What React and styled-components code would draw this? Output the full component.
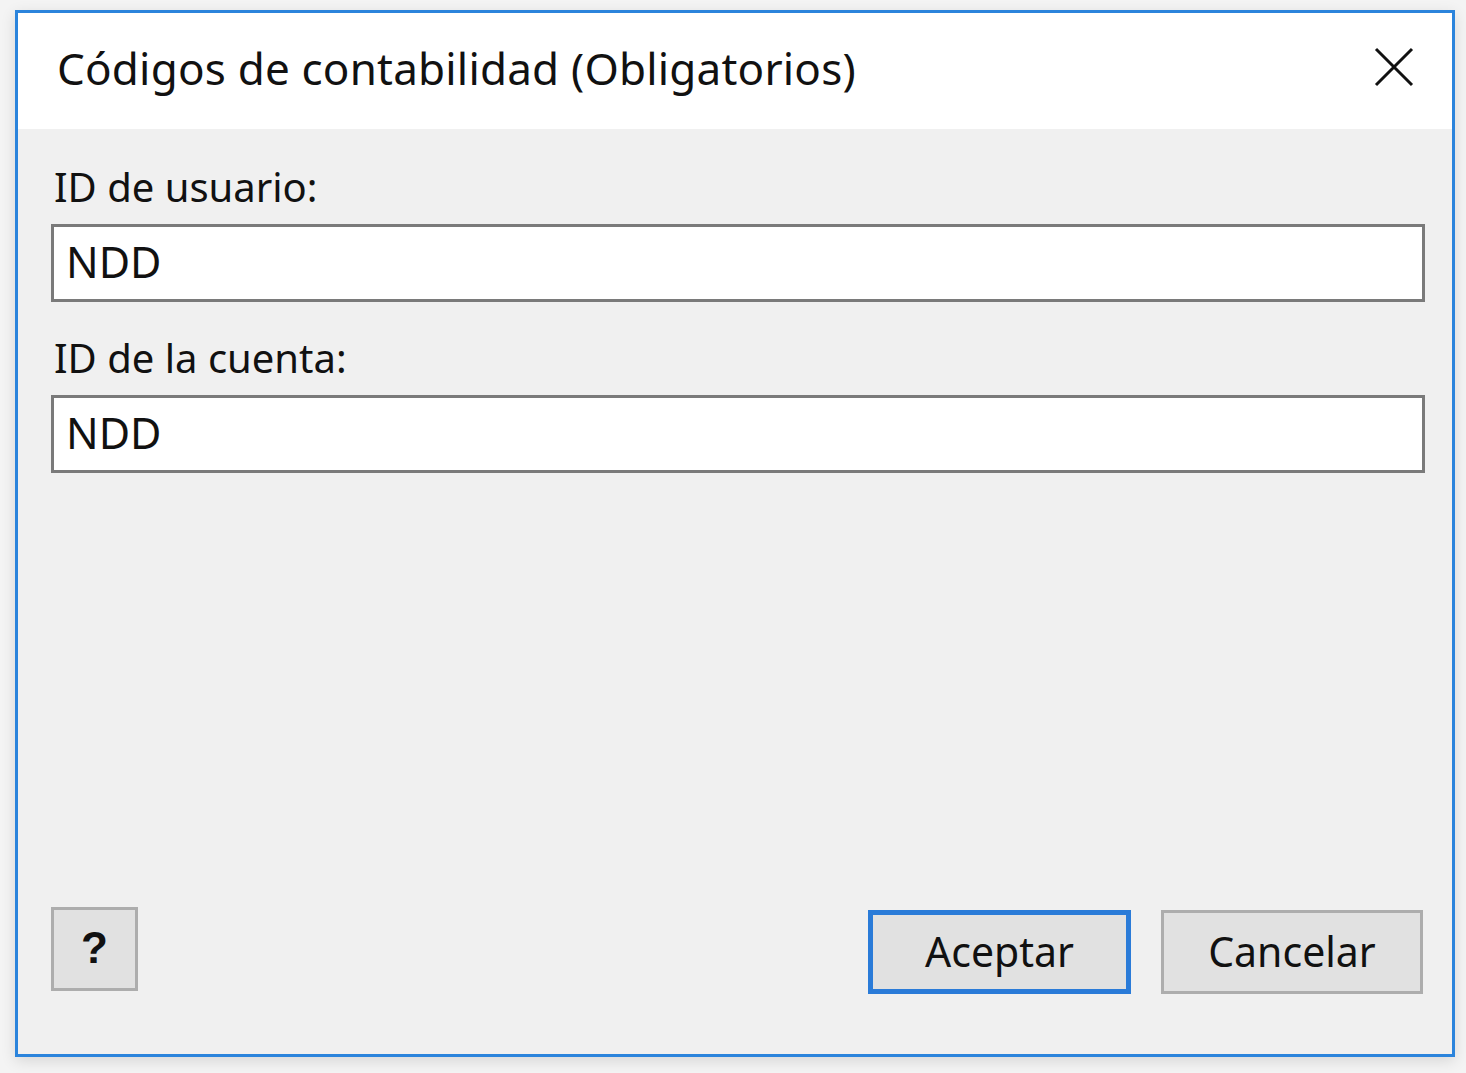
import React from 'react';
import styled, { createGlobalStyle } from 'styled-components';

const GlobalStyle = createGlobalStyle`
  html, body {
    margin: 0;
    padding: 0;
    background: #f4f4f4;
  }
  * { box-sizing: border-box; }
`;

const Page = styled.div`
  width: 1466px;
  height: 1073px;
  padding: 10px 0 0 15px;
`;

const Window = styled.div`
  width: 1440px;
  height: 1047px;
  border: 3px solid #2b84dc;
  background: #f0f0f0;
  display: flex;
  flex-direction: column;
  box-shadow: 0 4px 14px rgba(0, 0, 0, 0.12);
  font-family: "Noto Sans", "Open Sans", sans-serif;
  color: #111;
`;

const TitleBar = styled.div`
  height: 116px;
  background: #fff;
  display: flex;
  align-items: center;
  justify-content: space-between;
  padding: 0 38px 0 39px;
`;

const Title = styled.h1`
  margin: 0;
  font-size: 44px;
  font-weight: 400;
  letter-spacing: 0.2px;
  margin-top: -6px;
`;

const CloseButton = styled.button`
  border: none;
  background: none;
  padding: 0;
  width: 40px;
  height: 40px;
  margin-top: -8px;
  display: flex;
  align-items: center;
  justify-content: center;
  cursor: pointer;
`;

const Body = styled.div`
  flex: 1;
  display: flex;
  flex-direction: column;
  padding: 33px 29px 60px 33px;
`;

const Field = styled.div`
  display: flex;
  flex-direction: column;
  gap: 12px;
  margin-bottom: ${(p) => p.$gap || 0}px;
`;

const Label = styled.label`
  font-size: 40px;
  line-height: 50px;
  padding-left: 3px;
`;

const Input = styled.input`
  width: 1374px;
  height: 78px;
  border: 3px solid #7a7a7a;
  background: #fff;
  font-family: inherit;
  font-size: 43px;
  color: #111;
  padding: 0 0 4px 12px;
  outline: none;
`;

const Footer = styled.div`
  margin-top: auto;
  display: flex;
  align-items: flex-start;
`;

const Button = styled.button`
  height: 84px;
  width: ${(p) => p.$w}px;
  background: #e1e1e1;
  border: ${(p) => (p.$primary ? '5px solid #2a7bd8' : '3px solid #adadad')};
  font-family: "Noto Sans", "Open Sans", sans-serif;
  font-size: 41px;
  color: #111;
  display: flex;
  align-items: center;
  justify-content: center;
  padding: 0 0 2px;
  cursor: pointer;
`;

const HelpButton = styled(Button)`
  font-family: "Liberation Sans", Arial, sans-serif;
  font-weight: 700;
  font-size: 44px;
  margin-top: -3px;
`;

const Spacer = styled.div`
  flex: 1;
`;

const RightButtons = styled.div`
  display: flex;
  gap: 30px;
`;

export default function App() {
  return (
    <>
      <GlobalStyle />
      <Page>
        <Window>
          <TitleBar>
            <Title>Códigos de contabilidad (Obligatorios)</Title>
            <CloseButton aria-label="Cerrar">
              <svg width="40" height="40" viewBox="0 0 40 40">
                <path d="M2 2 L38 38 M38 2 L2 38" stroke="#111" strokeWidth="3" fill="none" />
              </svg>
            </CloseButton>
          </TitleBar>
          <Body>
            <Field $gap={31}>
              <Label>ID de usuario:</Label>
              <Input defaultValue="NDD" />
            </Field>
            <Field>
              <Label>ID de la cuenta:</Label>
              <Input defaultValue="NDD" />
            </Field>
            <Footer>
              <HelpButton $w={87}>?</HelpButton>
              <Spacer />
              <RightButtons>
                <Button $primary $w={263}>Aceptar</Button>
                <Button $w={262}>Cancelar</Button>
              </RightButtons>
            </Footer>
          </Body>
        </Window>
      </Page>
    </>
  );
}
